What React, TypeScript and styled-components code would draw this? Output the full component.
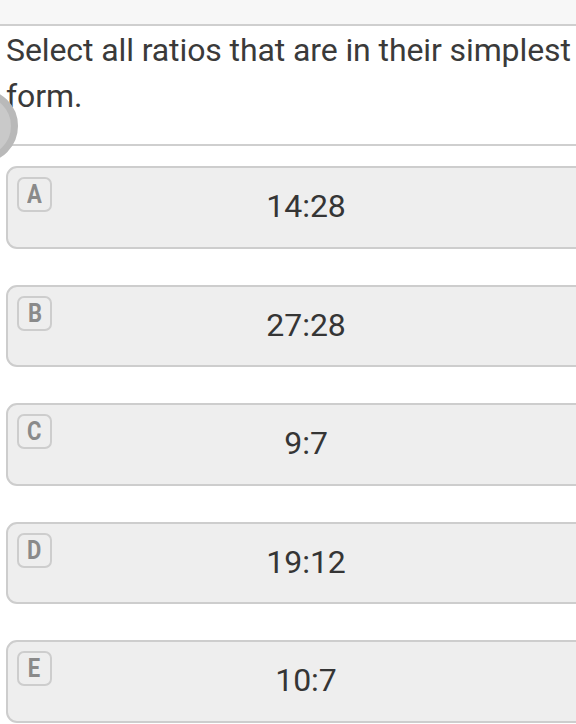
import React from 'react';
import styled, { createGlobalStyle } from 'styled-components';

const GlobalStyle = createGlobalStyle`
  html, body {
    margin: 0;
    padding: 0;
    background: #ffffff;
    overflow: hidden;
  }
  body {
    font-family: Roboto, "Liberation Sans", sans-serif;
    width: 576px;
    height: 724px;
  }
`;

const Page = styled.div`
  position: relative;
  width: 576px;
  height: 724px;
  overflow: hidden;
  background: #fff;
`;

const TopBand = styled.div`
  height: 24px;
  background: #f7f7f7;
  border-bottom: 2px solid #cfcfcf;
`;

const Question = styled.div`
  box-sizing: border-box;
  padding: 1px 0 0 6px;
  height: 118px;
  font-size: 32px;
  line-height: 46px;
  color: #3a3a3a;
  white-space: nowrap;
  letter-spacing: -0.1px;
`;

const Separator = styled.div`
  height: 2px;
  background: #cfcfcf;
`;

const ScrollKnob = styled.div`
  position: absolute;
  left: -56px;
  top: 89px;
  width: 60px;
  height: 60px;
  border-radius: 50%;
  border: 7px solid #b9b9b9;
  background: #c9c9c9;
`;

const Options = styled.div`
  display: flex;
  flex-direction: column;
  gap: 36px;
  padding: 20px 0 0 6px;
`;

const OptionCard = styled.div`
  position: relative;
  flex: none;
  width: 600px;
  height: 78.5px;
  border: 2px solid #cdcdcd;
  border-radius: 11px;
  background: #eeeeee;
  display: flex;
  align-items: center;
  justify-content: center;
`;

const Badge = styled.div`
  position: absolute;
  left: 9px;
  top: 9px;
  width: 31px;
  height: 31px;
  border: 2px solid #cdcdcd;
  border-radius: 7px;
  display: flex;
  align-items: center;
  justify-content: center;
  font-size: 25px;
  font-weight: 700;
  color: #8a8a8a;
`;

const BadgeLetter = styled.span`
  display: inline-block;
  transform: scaleX(0.88);
`;

const Answer = styled.span`
  font-size: 32px;
  color: #353535;
  margin: -2px 0 0 -4px;
`;

const options = [
  { letter: 'A', text: '14:28' },
  { letter: 'B', text: '27:28' },
  { letter: 'C', text: '9:7' },
  { letter: 'D', text: '19:12' },
  { letter: 'E', text: '10:7' },
];

export default function App() {
  return (
    <Page>
      <GlobalStyle />
      <TopBand />
      <Question>
        Select all ratios that are in their simplest
        <br />
        form.
      </Question>
      <Separator />
      <ScrollKnob />
      <Options>
        {options.map((o) => (
          <OptionCard key={o.letter}>
            <Badge>
              <BadgeLetter>{o.letter}</BadgeLetter>
            </Badge>
            <Answer>{o.text}</Answer>
          </OptionCard>
        ))}
      </Options>
    </Page>
  );
}
